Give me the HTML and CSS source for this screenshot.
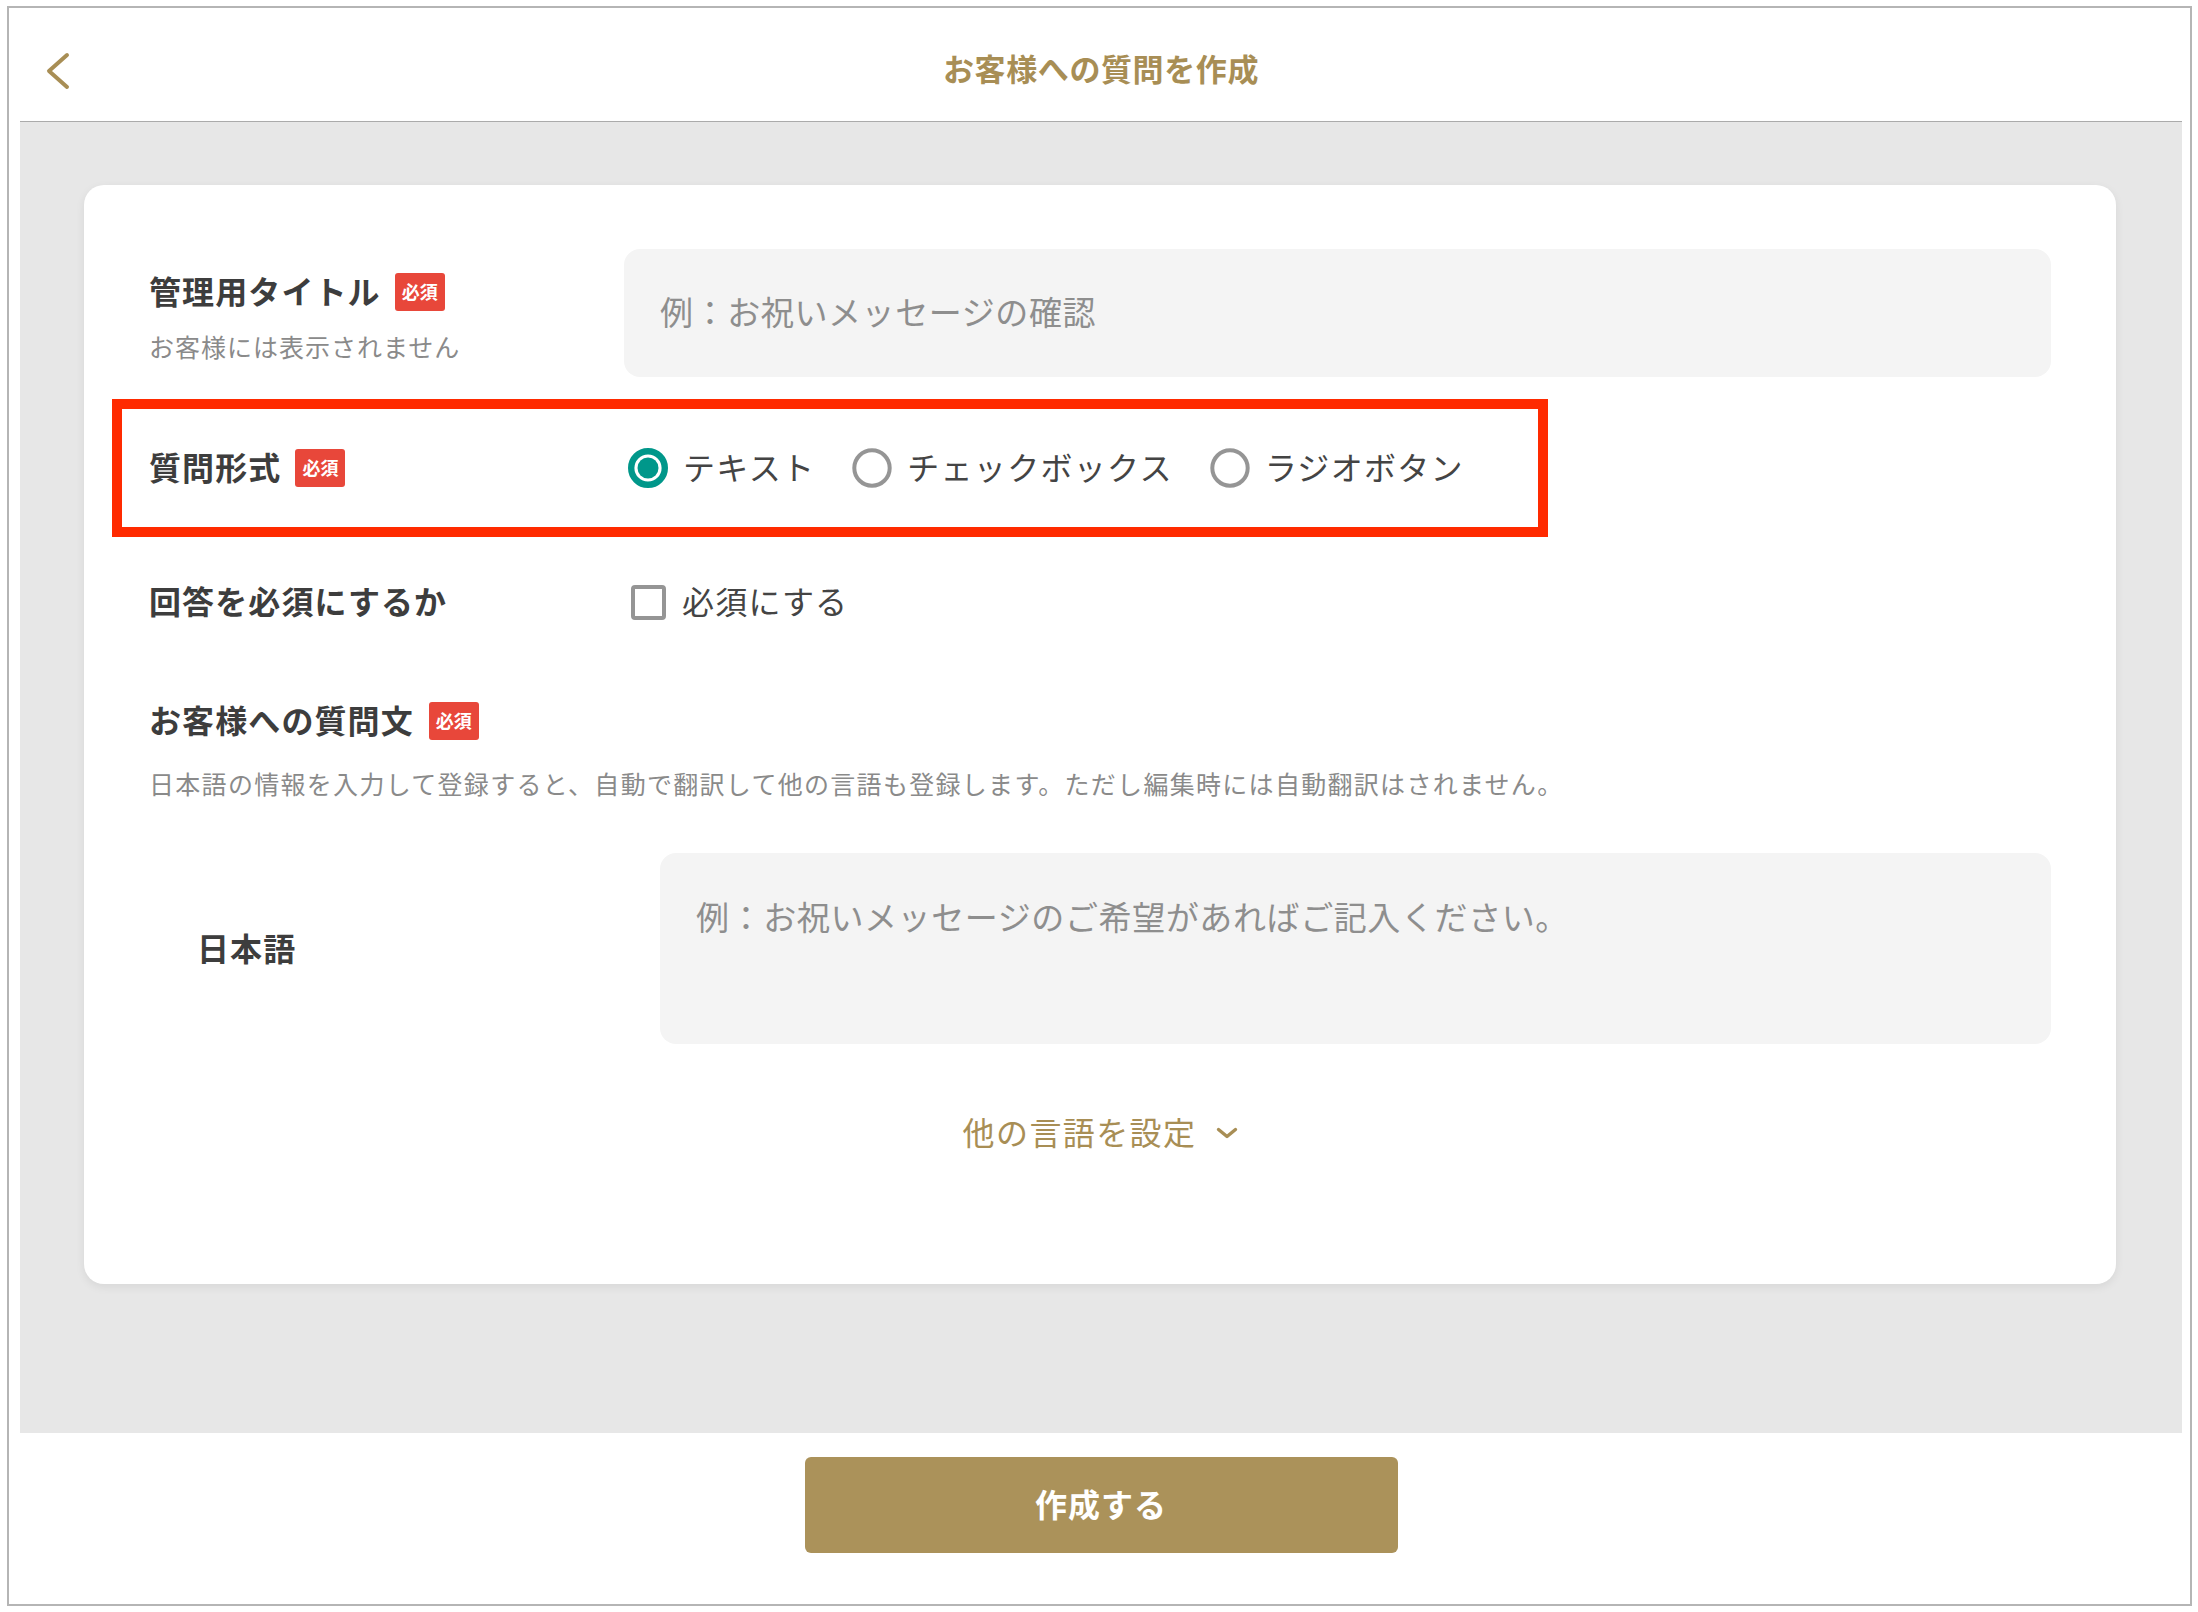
FILE: index.html
```html
<!DOCTYPE html>
<html lang="ja">
<head>
<meta charset="utf-8">
<title>お客様への質問を作成</title>
<link rel="stylesheet" href="styles.css">
</head>
<body>
<div class="frame">
  <header class="header">
    <div class="header-side">
      <svg class="back" width="26" height="40" viewBox="0 0 26 40" aria-hidden="true">
        <path d="M22 4 L4 20 L22 36" fill="none" stroke="#a88e55" stroke-width="4" stroke-linecap="round" stroke-linejoin="round"/>
      </svg>
    </div>
    <h1 class="title">お客様への質問を作成</h1>
    <div class="header-side"></div>
  </header>

  <main class="content">
    <section class="card">
      <div class="row row-title">
        <div class="label-col">
          <div class="label">管理用タイトル<span class="badge">必須</span></div>
          <div class="sub">お客様には表示されません</div>
        </div>
        <input class="field" type="text" placeholder="例：お祝いメッセージの確認">
      </div>

      <div class="row row-format">
        <div class="label-col center">
          <div class="label">質問形式<span class="badge">必須</span></div>
        </div>
        <div class="options">
          <label class="option">
            <svg width="40" height="40" viewBox="0 0 40 40" aria-hidden="true">
              <circle cx="20" cy="20" r="16.8" fill="none" stroke="#00978a" stroke-width="6.4"/>
              <circle cx="20" cy="20" r="10.5" fill="#00978a"/>
            </svg>
            <span class="opt-text">テキスト</span>
          </label>
          <label class="option">
            <svg width="40" height="40" viewBox="0 0 40 40" aria-hidden="true">
              <circle cx="20" cy="20" r="17.7" fill="none" stroke="#959595" stroke-width="4"/>
            </svg>
            <span class="opt-text">チェックボックス</span>
          </label>
          <label class="option">
            <svg width="40" height="40" viewBox="0 0 40 40" aria-hidden="true">
              <circle cx="20" cy="20" r="17.7" fill="none" stroke="#959595" stroke-width="4"/>
            </svg>
            <span class="opt-text">ラジオボタン</span>
          </label>
        </div>
      </div>

      <div class="row row-required">
        <div class="label-col center">
          <div class="label">回答を必須にするか</div>
        </div>
        <label class="check">
          <span class="box"></span>
          <span class="opt-text">必須にする</span>
        </label>
      </div>

      <div class="section-head">
        <div class="label">お客様への質問文<span class="badge">必須</span></div>
      </div>
      <p class="desc">日本語の情報を入力して登録すると、自動で翻訳して他の言語も登録します。ただし編集時には自動翻訳はされません。</p>

      <div class="row row-lang">
        <div class="lang-col">
          <div class="label">日本語</div>
        </div>
        <textarea class="field area" placeholder="例：お祝いメッセージのご希望があればご記入ください。"></textarea>
      </div>

      <div class="more">
        <span class="more-text">他の言語を設定</span>
        <svg width="22" height="12" viewBox="0 0 22 12" aria-hidden="true">
          <path d="M2.5 2.5 L11 9.5 L19.5 2.5" fill="none" stroke="#a88e55" stroke-width="3.4" stroke-linecap="round" stroke-linejoin="round"/>
        </svg>
      </div>
    </section>
  </main>

  <footer class="footer">
    <button class="submit" type="button">作成する</button>
  </footer>
</div>
</body>
</html>
```

FILE: styles.css
```css
* { box-sizing: border-box; }

html, body {
  margin: 0;
  padding: 0;
  background: #ffffff;
}

body {
  font-family: "Noto Sans CJK JP", "Noto Sans", sans-serif;
  color: #3d3d3d;
}

.frame {
  margin: 6px 0 0 7px;
  width: 2185px;
  height: 1600px;
  border: 2px solid #b5b5b5;
  padding: 0 8px 0 11px;
  display: flex;
  flex-direction: column;
  background: #fff;
}

/* header */
.header {
  height: 114px;
  flex: none;
  border-bottom: 1px solid #ababab;
  padding-top: 12px;
  display: grid;
  grid-template-columns: 1fr auto 1fr;
  align-items: center;
}

.header-side {
  display: flex;
  align-items: center;
}

.back {
  display: block;
  margin-left: 25px;
}

.title {
  margin: 0;
  font-size: 31px;
  letter-spacing: 0.6px;
  font-weight: 700;
  color: #a88e55;
  line-height: 44px;
  padding-bottom: 5px;
}

/* grey content area */
.content {
  flex: none;
  height: 1311px;
  background: #e7e7e7;
  padding: 63px 66px 0 64px;
}

.card {
  background: #fff;
  border-radius: 20px;
  height: 1099px;
  padding: 64px 65px 0 66px;
  box-shadow: 0 3px 10px rgba(0, 0, 0, 0.07);
}

.row {
  display: flex;
}

.label-col {
  width: 474px;
  flex: none;
}

.label-col.center {
  display: flex;
  align-items: center;
}

.label {
  display: flex;
  align-items: center;
  font-size: 32px;
  letter-spacing: 1.1px;
  line-height: 46px;
  font-weight: 700;
  color: #3d3d3d;
  white-space: nowrap;
  padding-bottom: 4px;
  margin-left: -1px;
}

.badge {
  display: inline-flex;
  align-items: center;
  justify-content: center;
  width: 50px;
  height: 38px;
  margin-left: 14px;
  margin-top: 4px;
  border-radius: 3px;
  background: #e8473a;
  color: #fff;
  font-size: 18px;
  letter-spacing: 0;
  font-weight: 700;
  padding-bottom: 2px;
}

.sub {
  margin-top: 11px;
  font-size: 25px;
  letter-spacing: 1px;
  line-height: 36px;
  color: #8a8a8a;
  white-space: nowrap;
  margin-left: -1px;
}

/* title row */
.row-title {
  height: 128px;
}

.row-title .label-col {
  padding-top: 18px;
}

.field {
  flex: 1;
  min-width: 0;
  border: none;
  outline: none;
  background: #f4f4f4;
  border-radius: 16px;
  padding: 0 36px 4px;
  font-family: "Noto Sans CJK JP", "Noto Sans", sans-serif;
  font-size: 33px;
  letter-spacing: 0.6px;
  color: #3d3d3d;
  height: 128px;
}

.field::placeholder {
  color: #8e8e8e;
  opacity: 1;
}

/* format row with annotation box */
.row-format {
  position: relative;
  margin-top: 22px;
  height: 138px;
  align-items: center;
}

.row-format::after {
  content: "";
  position: absolute;
  top: 0;
  bottom: 0;
  left: -38px;
  right: 503px;
  border: 10px solid #ff2a00;
  pointer-events: none;
}

.options {
  display: flex;
  align-items: center;
  padding-left: 4px;
}

.option {
  display: flex;
  align-items: center;
  margin-right: 37px;
  font-size: 32px;
  letter-spacing: 1.3px;
  line-height: 46px;
  color: #444;
}

.opt-text {
  padding-bottom: 4px;
}

.option svg {
  display: block;
  margin-right: 15px;
  flex: none;
}

/* required row */
.row-required {
  margin-top: 35px;
  height: 60px;
  align-items: center;
}

.check {
  display: flex;
  align-items: center;
  padding-left: 7px;
  font-size: 32px;
  letter-spacing: 1.2px;
  line-height: 46px;
  color: #444;
}

.box {
  width: 35px;
  height: 35px;
  border: 4px solid #959595;
  border-radius: 4px;
  margin-right: 16px;
  flex: none;
}

/* question section */
.section-head {
  margin-top: 66px;
  height: 46px;
  display: flex;
  align-items: center;
}

.section-head .badge {
  margin-left: 15px;
}

.desc {
  margin: 21px 0 0;
  font-size: 25px;
  letter-spacing: 1.3px;
  line-height: 36px;
  height: 38px;
  color: #8a8a8a;
  white-space: nowrap;
  margin-left: -1px;
}

.row-lang {
  margin-top: 50px;
  height: 191px;
  align-items: center;
}

.lang-col {
  width: 510px;
  flex: none;
  padding-left: 48px;
}

.area {
  height: 191px;
  resize: none;
  padding: 38px 36px 30px;
  line-height: 50px;
}

/* other languages */
.more {
  margin-top: 66px;
  height: 46px;
  display: flex;
  align-items: center;
  justify-content: center;
  color: #a88e55;
  font-size: 32px;
  letter-spacing: 1.4px;
  line-height: 46px;
}

.more-text {
  padding-bottom: 4px;
}

.more svg {
  display: block;
  margin-left: 20px;
}

/* footer */
.footer {
  flex: 1;
  display: flex;
  justify-content: center;
  align-items: flex-start;
  padding-top: 24px;
}

.submit {
  width: 593px;
  height: 96px;
  border: none;
  border-radius: 6px;
  background: #ab925a;
  color: #fff;
  font-family: "Noto Sans CJK JP", "Noto Sans", sans-serif;
  font-size: 32px;
  letter-spacing: 1px;
  font-weight: 700;
  padding-bottom: 5px;
  cursor: pointer;
}
```
